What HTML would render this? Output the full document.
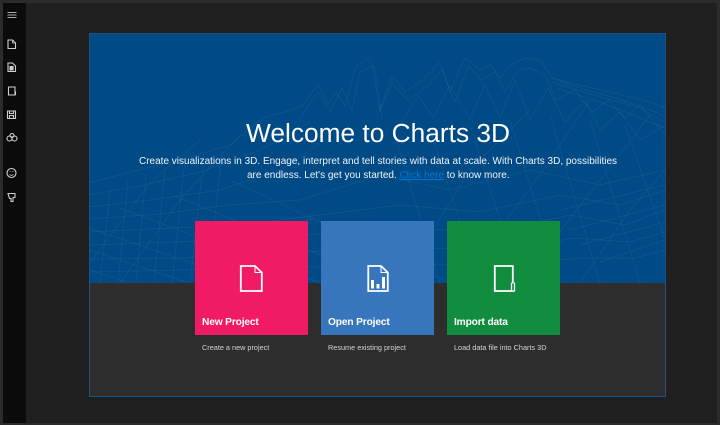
<!DOCTYPE html>
<html><head><meta charset="utf-8"><style>
html,body{margin:0;padding:0;background:#1f1f1f}
body{width:720px;height:425px;position:relative;overflow:hidden;font-family:"Liberation Sans",sans-serif;color:#fff}
div{position:absolute}
#frame{left:0;top:0;width:720px;height:425px;box-sizing:border-box;border:3px solid #2b2b2b;border-bottom-width:2px;border-left-width:3px}
#side{left:3px;top:3px;width:23px;height:420px;background:#0b0b0b}
#panel{left:90px;top:34px;width:575px;height:362px;background:#2d2d2d;box-shadow:0 0 0 1px #1c5384}
#blue{left:0;top:0;width:575px;height:249px;background:#004a86;overflow:hidden}
.t{white-space:nowrap;filter:blur(.25px)}
.tile{top:221px;width:113px;height:114px}
.lbl{font-size:10.2px;letter-spacing:-.15px;font-weight:bold;left:7px;top:96px;color:#fff}
.sub{top:343px;font-size:7.3px;color:#d5d5d5;white-space:nowrap;filter:blur(.25px)}
svg{position:absolute;overflow:visible}
</style></head><body>
<div id="frame"></div>
<div id="side"></div>
<svg style="left:0;top:0;filter:blur(.3px)" width="30" height="210" fill="none" stroke="#cfcfcf" stroke-width="1.1">
<path d="M7.500 12.500H16.500M7.500 15H16.500M7.500 17.500H16.500" stroke="#aaa"/>
<path d="M8 40H12.500L15.500 43V48.500H8Z"/><path d="M12.500 40V43H15.500" stroke-width=".8"/>
<path d="M8 63H12.500L15.500 66V71.500H8Z"/><path d="M10 66.500H13V70H10Z" fill="#cfcfcf"/>
<path d="M8.500 87H15V95H8.500Z"/><path d="M15.500 91.500V95"/>
<path d="M7.500 111H15.500V118.500H7.500Z"/><path d="M9.500 111V113.500H13.500V111M9.500 118.500V115.500H13.500V118.500"/>
<circle cx="9.500" cy="138.500" r="2.500"/><circle cx="14.500" cy="138.500" r="2.500"/><circle cx="12" cy="135.500" r="2"/>
<circle cx="11.500" cy="173" r="4.500"/><path d="M9.500 174.500Q11.500 176.200 13.500 174.500" stroke-width=".8"/><path d="M9.800 171.500H10.500M12.500 171.500H13.300"/>
<path d="M8 193.500H15V197.500H13V201.500H11V198.500H9.500Z"/>
</svg>
<div id="panel"><div id="blue">
<svg width="575" height="249" viewBox="90 34 575 249" fill="none" stroke="#7fb2e0" stroke-opacity=".13" stroke-width=".7" style="filter:blur(.3px)">
<path d="M262 118L285 112L302 106L318 84L328 104L336 92L345 106L356 66L362 62L368 58L375 70L382 120"/>
<path d="M300 118L318 92L330 112L342 88L352 110L360 72L372 66L380 110L392 76L405 92L425 78L440 62L450 92L465 58L480 70L490 64L500 78L510 66L520 60L528 58L540 60L552 78L575 84L610 92L650 102L665 108"/>
<path d="M375 120L392 84L408 100L428 86L442 70L455 102L468 66L482 80L495 72L505 92L518 70L530 68L545 75L556 100L575 90L592 112L608 100L625 118L640 105L665 135"/>
<path d="M400 125L418 95L433 118L450 85L470 120L485 85L500 118L515 80L530 120L548 88L565 122L585 100L600 130L620 112L640 140L665 125"/>
<path d="M552 78L580 88L615 98L650 110L665 116M552 82L590 94L640 108L665 122M556 88L600 102L665 128"/>
<path d="M89 183L130 172L180 160L230 145L262 118M89 195L140 186L200 172L260 150L310 122M89 207L150 200L220 190L280 170L340 130"/>
<path d="M89 219L160 214L230 205L300 200L380 175L450 190L530 170L600 185L665 170M89 232L170 228L240 225L320 215L400 205L480 212L560 195L620 205L665 190"/>
<path d="M89 245L175 242L250 240L330 233L410 228L490 232L570 215L625 225L665 210M89 259L180 258L260 255L340 250L420 248L500 250L575 238L630 242L665 232M89 272L185 270L270 268L350 266L430 264L510 265L580 258L635 258L665 250"/>
<path d="M100 283L110 190M118 283L128 180M136 283L146 174M154 283L165 168M172 283L185 160M190 283L204 155M208 283L222 150M90 262L150 183L200 140M120 283L180 200L240 135"/>
<path d="M89 270L130 283M89 250L190 283M89 228L250 283M120 208L320 283M175 196L390 283M230 180L450 283"/>
<path d="M395 135L440 283M430 130L480 283M470 125L520 283M510 120L560 283M550 115L600 283M590 120L640 283M625 125L665 240M400 283L470 170L530 110M460 283L540 175L590 100M520 283L600 180L650 115M580 283L630 210L665 170"/>
<path d="M570 230L665 205M580 245L665 222M600 262L665 240M560 210L665 185"/>
</svg>
<div class="t" style="left:156px;top:84px;font-size:26.3px">Welcome to Charts 3D</div>
<div class="t" style="left:49px;top:122px;font-size:10px;color:#f0f4f8">Create visualizations in 3D. Engage, interpret and tell stories with data at scale. With Charts 3D, possibilities</div>
<div class="t" style="left:157px;top:136px;font-size:10px;color:#f0f4f8">are endless. Let's get you started. <span style="color:#0078d7;text-decoration:underline">Click here</span> to know more.</div>
</div></div>
<div class="tile" style="left:195px;background:#f01b64"><div class="lbl t">New Project</div>
<svg style="left:0;top:0" width="113" height="114" fill="none" stroke="#fff" stroke-width="1.8"><path d="M45.800 45H60L66.800 51.500V70H45.800Z"/><path d="M60 45V51.500H66.800" stroke-width="1"/></svg></div>
<div class="tile" style="left:321px;background:#3776bc"><div class="lbl t">Open Project</div>
<svg style="left:0;top:0" width="113" height="114" fill="none" stroke="#fff" stroke-width="1.8"><path d="M47.300 45H60L66.800 51.500V70H47.300Z"/><path d="M60 45V51.500H66.800" stroke-width="1"/><path d="M50 59H53V67.500H50ZM55.500 63H58.500V67.500H55.500ZM61 56H64V67.500H61Z" fill="#fff" stroke="none"/></svg></div>
<div class="tile" style="left:447px;background:#128d40"><div class="lbl t">Import data</div>
<svg style="left:0;top:0" width="113" height="114" fill="none" stroke="#fff" stroke-width="1.8"><path d="M47.800 45H65.800V70H47.800Z"/><path d="M64.500 70V62.500Q66 60.500 67.500 62.500V70Z" fill="#128d40" stroke-width="1.300"/></svg></div>
<div class="sub" style="left:202px">Create a new project</div>
<div class="sub" style="left:328px">Resume existing project</div>
<div class="sub" style="left:454px">Load data file into Charts 3D</div>
</body></html>
